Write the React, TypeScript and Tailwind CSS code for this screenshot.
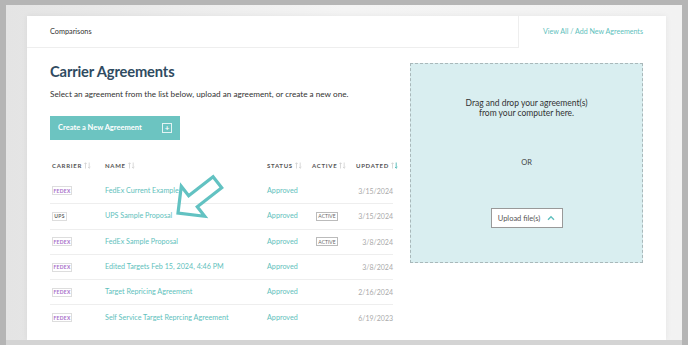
import React from "react";

const teal = "#5fbfbd";

const rows = [
    { carrier: "FEDEX", name: "FedEx Current Example", active: false, updated: "3/15/2024" },
    { carrier: "UPS", name: "UPS Sample Proposal", active: true, updated: "3/15/2024" },
    { carrier: "FEDEX", name: "FedEx Sample Proposal", active: true, updated: "3/8/2024" },
    { carrier: "FEDEX", name: "Edited Targets Feb 15, 2024, 4:46 PM", active: false, updated: "3/8/2024" },
    { carrier: "FEDEX", name: "Target Repricing Agreement", active: false, updated: "2/16/2024" },
    { carrier: "FEDEX", name: "Self Service Target Reprcing Agreement", active: false, updated: "6/19/2023" },
];

function SortIcon({ down }: { down?: boolean }) {
    return (
        <svg width="7" height="7" viewBox="0 0 7 7" className="ml-[2px] shrink-0">
            <path d="M1.5 6.5V0.8M0.3 2L1.5 0.8L2.7 2" stroke="#cfcfcf" strokeWidth="0.8" fill="none" />
            <path d="M5.2 0.5V6.2M4 5L5.2 6.2L6.4 5" stroke={down ? teal : "#cfcfcf"} strokeWidth={down ? 1 : 0.8} fill="none" />
        </svg>
    );
}

function HeaderCell({ label, down, className }: { label: string; down?: boolean; className: string }) {
    return (
        <div className={`flex items-center shrink-0 text-[6px] font-bold tracking-[0.12em] text-[#555] ${className}`}>
            {label}
            <SortIcon down={down} />
        </div>
    );
}

export default function App() {
    return (
        <div
            className="w-[688px] h-[345px] overflow-hidden bg-[#b5b5b5] pt-[5px] px-[6px]"
            style={{ fontFamily: "Lato, 'Noto Sans', sans-serif" }}
        >
            <div className="h-[335px] bg-gradient-to-r from-[#e4e4e4] via-[#f4f4f4] to-[#f2f2f2] pt-[11px] pl-[21px] pr-[16px]">
                <div className="h-full bg-white shadow-[0_0_6px_rgba(0,0,0,0.06)]">
                    {/* Header */}
                    <div className="flex h-[32px]">
                        <div className="w-[492px] flex items-center pt-[1px] pl-[23px] border-b border-r border-[#eeeeee] text-[7.3px] text-[#333]">
                            Comparisons
                        </div>
                        <div className="flex-1 flex items-center justify-end pt-[1px] pr-[23px] text-[7.1px]" style={{ color: teal }}>
                            View All / Add New Agreements
                        </div>
                    </div>

                    <div className="flex pl-[23px]">
                        {/* Left */}
                        <div className="w-[343px] shrink-0 relative">
                            <h1 className="mt-[13px] h-[20px] leading-[20px] text-[14.7px] font-bold tracking-[-0.01em] text-[#2f4b61]">
                                Carrier Agreements
                            </h1>
                            <p className="mt-[7px] h-[12px] leading-[12px] text-[8.2px] text-[#333]">
                                Select an agreement from the list below, upload an agreement, or create a new one.
                            </p>
                            <button className="mt-[16px] w-[130px] h-[24px] bg-[#6cc4c1] flex items-center justify-between pl-[8px] pr-[8px] text-white text-[7.5px] font-bold">
                                Create a New Agreement
                                <span className="w-[10px] h-[10px] border border-white/80 flex items-center justify-center text-[8px] leading-none">
                                    +
                                </span>
                            </button>

                            <div className="mt-[16px] h-[18px] flex items-center">
                                <HeaderCell label="CARRIER" className="w-[55px] pl-[2px]" />
                                <HeaderCell label="NAME" className="w-[162px]" />
                                <HeaderCell label="STATUS" className="w-[45px]" />
                                <HeaderCell label="ACTIVE" className="w-[44px]" />
                                <HeaderCell label="UPDATED" down className="w-[37px]" />
                            </div>

                            <div className="mt-[4px]">
                                {rows.map((r, i) => (
                                    <div
                                        key={i}
                                        className={`h-[25.3px] flex items-center leading-[10px] ${i > 0 ? "border-t border-[#eeeeee]" : ""}`}
                                    >
                                        <div className="w-[55px] shrink-0 pl-[2px] flex items-center">
                                            <span
                                                className={`flex items-center justify-center h-[9px] border border-[#dddddd] text-[5px] font-bold tracking-[0.05em] ${r.carrier === "UPS" ? "w-[15px] text-[#666]" : "w-[20px] text-[#a56cc8]"}`}
                                            >
                                                {r.carrier}
                                            </span>
                                        </div>
                                        <div className="w-[162px] shrink-0 text-[7.2px] whitespace-nowrap" style={{ color: teal }}>
                                            {r.name}
                                        </div>
                                        <div className="w-[49px] shrink-0 text-[7.2px]" style={{ color: teal }}>
                                            Approved
                                        </div>
                                        <div className="w-[40px] shrink-0 flex items-center">
                                            {r.active && (
                                                <span className="flex items-center justify-center w-[22px] h-[9px] border border-[#bbbbbb] text-[5px] text-[#666]">
                                                    ACTIVE
                                                </span>
                                            )}
                                        </div>
                                        <div className="flex-1 text-right text-[7px] text-[#aaaaaa]">{r.updated}</div>
                                    </div>
                                ))}
                            </div>

                            {/* Annotation arrow */}
                            <svg
                                className="absolute left-[120px] top-[126px]"
                                width="70"
                                height="55"
                                viewBox="0 0 70 55"
                            >
                                <g transform="translate(8 39) rotate(-38)">
                                    <polygon
                                        points="0,0 19,-19 19,-7 50,-7 50,7 19,7 19,19"
                                        fill="none"
                                        stroke="#62c2c2"
                                        strokeWidth="3.2"
                                        strokeLinejoin="miter"
                                    />
                                </g>
                            </svg>
                        </div>

                        {/* Drop zone */}
                        <div className="ml-[17px] mt-[15px] w-[233px] h-[200px] bg-[#d9eef0] border border-dashed border-[#a9b8ba] flex flex-col items-center">
                            <p className="mt-[34px] text-center text-[8.5px] leading-[10px] text-[#333]">
                                Drag and drop your agreement(s)
                                <br />
                                from your computer here.
                            </p>
                            <div className="mt-[39px] text-[7.5px] text-[#444]">OR</div>
                            <button className="mt-[40px] w-[72px] h-[20px] bg-white border border-[#999] flex items-center justify-center gap-[7px] text-[7.5px] text-[#555]">
                                Upload file(s)
                                <svg width="8" height="6" viewBox="0 0 8 6">
                                    <path d="M1 4.8L4 1.8L7 4.8" stroke={teal} strokeWidth="1.4" fill="none" />
                                </svg>
                            </button>
                        </div>
                    </div>
                </div>
            </div>
            <div className="h-[5px] bg-[#d4d4d4]" />
        </div>
    );
}
